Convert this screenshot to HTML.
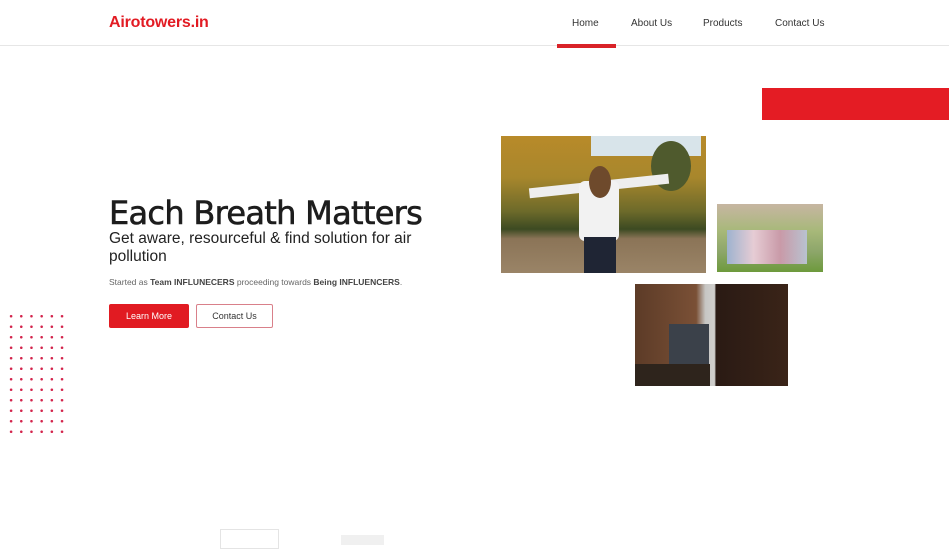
<!DOCTYPE html>
<html><head><meta charset="utf-8"><style>
*{margin:0;padding:0;box-sizing:border-box}
body{width:949px;height:540px;overflow:hidden;background:#fff;font-family:"Liberation Sans",sans-serif;position:relative}
.hdr{position:absolute;left:0;top:0;width:949px;height:46px;border-bottom:1px solid #e6e6e6}
.logo{position:absolute;left:109px;top:14px;font-size:16px;font-weight:bold;color:#e21b23;letter-spacing:-0.2px}
.nav a{position:absolute;top:18px;font-size:10px;color:#333;text-decoration:none}
.ul{position:absolute;left:557px;top:44px;width:59px;height:4px;background:#d92228}
.redbar{position:absolute;left:762px;top:88px;width:187px;height:32px;background:#e41c24}
h1{position:absolute;left:109px;top:194px;font-size:32px;font-weight:normal;color:#1d1d1d;font-family:"DejaVu Sans",sans-serif;letter-spacing:-0.7px;-webkit-text-stroke:0.6px #1d1d1d;white-space:nowrap}
.sub{position:absolute;left:109px;top:230px;width:340px;font-size:15.5px;line-height:18px;color:#222}
.small{position:absolute;left:109px;top:277px;font-size:8.5px;color:#666;white-space:nowrap}
.small b{color:#444}
.b1{position:absolute;left:109px;top:304px;width:80px;height:24px;background:#e11b22;border-radius:2px;color:#fff;font-size:9px;text-align:center;line-height:24px}
.b2{position:absolute;left:196px;top:304px;width:77px;height:24px;border:1px solid #d9808a;border-radius:2px;color:#333;font-size:9px;text-align:center;line-height:22px}
.dots{position:absolute;left:6px;top:311px;width:61px;height:126px;background-image:radial-gradient(circle,#d3244c 1.1px,transparent 1.5px);background-size:10.2px 10.5px}
.img{position:absolute;overflow:hidden}
</style></head><body>
<div class="hdr"></div>
<div class="logo">Airotowers.in</div>
<div class="nav"><a style="left:572px">Home</a><a style="left:631px">About Us</a><a style="left:703px">Products</a><a style="left:775px">Contact Us</a></div>
<div class="ul"></div>
<div class="redbar"></div>
<h1>Each Breath Matters</h1>
<div class="sub">Get aware, resourceful &amp; find solution for air pollution</div>
<div class="small">Started as <b>Team INFLUNECERS</b> proceeding towards <b>Being INFLUENCERS</b>.</div>
<div class="b1">Learn More</div>
<div class="b2">Contact Us</div>
<div class="dots"></div>

<div class="img" style="left:501px;top:136px;width:205px;height:137px;background:linear-gradient(180deg,#b88a2a 0%,#a8872c 30%,#6d6a2a 55%,#3c4a22 68%,#8b7457 75%,#9a8467 100%)">
 <div style="position:absolute;left:90px;top:0;width:110px;height:20px;background:#d8e4ea"></div>
 <div style="position:absolute;left:150px;top:5px;width:40px;height:50px;background:#4f5a2d;border-radius:50%"></div>
 <div style="position:absolute;left:28px;top:45px;width:140px;height:10px;background:#eee;transform:rotate(-6deg)"></div>
 <div style="position:absolute;left:78px;top:45px;width:40px;height:60px;background:#f2f2f2;border-radius:6px"></div>
 <div style="position:absolute;left:88px;top:30px;width:22px;height:32px;background:#6e4a2c;border-radius:50%"></div>
 <div style="position:absolute;left:83px;top:101px;width:32px;height:36px;background:#1f2534"></div>
</div>
<div class="img" style="left:717px;top:204px;width:106px;height:68px;background:linear-gradient(180deg,#c7b6a2 0%,#a7b879 40%,#8da66a 70%,#6d9a3c 100%)">
 <div style="position:absolute;left:10px;top:26px;width:80px;height:34px;background:linear-gradient(90deg,#9eb3cf,#e6ccd4,#c99aa8,#b8c2d0)"></div>
</div>
<div class="img" style="left:635px;top:284px;width:153px;height:102px;background:linear-gradient(90deg,#5c3b27 0%,#7a5036 40%,#c7c6c4 46%,#d0cfcd 52%,#2a1a14 53%,#3a2418 100%)">
 <div style="position:absolute;left:34px;top:40px;width:40px;height:62px;background:#3b414a"></div>
 <div style="position:absolute;left:0;top:80px;width:75px;height:22px;background:#2e241c"></div>
</div>
<div style="position:absolute;left:220px;top:529px;width:59px;height:20px;border:1px solid #e4e4e4"></div>
<div style="position:absolute;left:341px;top:535px;width:43px;height:10px;background:#f0f0f0"></div>
</body></html>
